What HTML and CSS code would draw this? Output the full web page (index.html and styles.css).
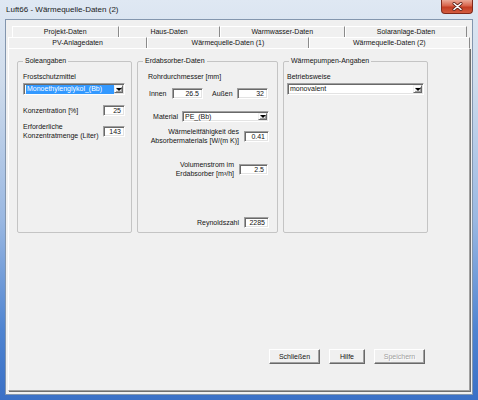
FILE: index.html
```html
<!DOCTYPE html>
<html lang="de">
<head>
    <meta charset="UTF-8">
    <title>Luft66 - Wärmequelle-Daten (2)</title>
    <link rel="stylesheet" href="styles.css">
</head>
<body>
    <div class="window">
        <div class="titlebar">
            <span class="title">Luft66 - Wärmequelle-Daten (2)</span>
            <button class="close" aria-label="Schließen">
                <svg width="11" height="9" viewBox="0 0 11 9">
                    <path d="M2 1.5 L9 7.5 M9 1.5 L2 7.5" stroke="#5a1e14" stroke-width="3" stroke-linecap="round"/>
                    <path d="M2 1.5 L9 7.5 M9 1.5 L2 7.5" stroke="#fff" stroke-width="1.6" stroke-linecap="round"/>
                </svg>
            </button>
        </div>

        <div class="client">
            <div class="tabrow back">
                <div class="tab">Projekt-Daten</div>
                <div class="tab">Haus-Daten</div>
                <div class="tab">Warmwasser-Daten</div>
                <div class="tab">Solaranlage-Daten</div>
            </div>
            <div class="tabrow front">
                <div class="tab">PV-Anlagedaten</div>
                <div class="tab">Wärmequelle-Daten (1)</div>
                <div class="tab active">Wärmequelle-Daten (2)</div>
            </div>

            <div class="page">
                <div class="groups">
                    <fieldset class="group sole">
                        <legend>Soleangaben</legend>
                        <div class="lbl">Frostschutzmittel</div>
                        <div class="combo">
                            <span class="value"><span class="selected">Monoethylenglykol_(Bb)</span></span>
                            <span class="arrow"></span>
                        </div>
                        <div class="row konz">
                            <span>Konzentration [%]</span>
                            <div class="field w22">25</div>
                        </div>
                        <div class="row menge">
                            <span>Erforderliche<br>Konzentratmenge (Liter)</span>
                            <div class="field w22">143</div>
                        </div>
                    </fieldset>

                    <fieldset class="group erd">
                        <legend>Erdabsorber-Daten</legend>
                        <div class="lbl indent">Rohrdurchmesser [mm]</div>
                        <div class="dims">
                            <span class="dim-lbl">Innen</span>
                            <div class="field w31">26.5</div>
                            <span class="dim-lbl aussen">Außen</span>
                            <div class="field w31">32</div>
                        </div>
                        <div class="row-end material">
                            <span>Material</span>
                            <div class="combo w87">
                                <span class="value">PE_(Bb)</span>
                                <span class="arrow"></span>
                            </div>
                        </div>
                        <div class="row-end leit">
                            <span>Wärmeleitfähigkeit des<br>Absorbermaterials [W/(m K)]</span>
                            <div class="field w25">0.41</div>
                        </div>
                        <div class="row-end volumen">
                            <span>Volumenstrom im<br>Erdabsorber [m³/h]</span>
                            <div class="field w29 nudge">2.5</div>
                        </div>
                        <div class="row-end reynolds">
                            <span>Reynoldszahl</span>
                            <div class="field w25">2285</div>
                        </div>
                    </fieldset>

                    <fieldset class="group wp">
                        <legend>Wärmepumpen-Angaben</legend>
                        <div class="lbl">Betriebsweise</div>
                        <div class="combo">
                            <span class="value">monovalent</span>
                            <span class="arrow"></span>
                        </div>
                    </fieldset>
                </div>

                <div class="actions">
                    <button class="btn wide">Schließen</button>
                    <button class="btn narrow">Hilfe</button>
                    <button class="btn wide" disabled>Speichern</button>
                </div>
            </div>
        </div>
    </div>
</body>
</html>
```

FILE: styles.css
```css
* {
    box-sizing: border-box;
}

body {
    margin: 0;
    font-family: "Liberation Sans", Arial, sans-serif;
    font-size: 7px;
    color: #141414;
}

/* window frame */
.window {
    width: 478px;
    height: 400px;
    display: flex;
    flex-direction: column;
    padding: 0 5px 5px 5px;
    background: linear-gradient(180deg, #dfe8f3 0px, #cfdcec 80px, #9ab8e2 220px, #4f84d1 330px, #3a70c6 400px);
}

.titlebar {
    flex: none;
    height: 19px;
    display: flex;
    justify-content: space-between;
    align-items: flex-start;
}

.title {
    font-size: 8px;
    line-height: 10px;
    padding: 5px 0 0 1px;
    color: #1b1b1b;
}

.close {
    width: 32px;
    height: 14px;
    padding: 0;
    border: 1px solid #80291b;
    border-top: none;
    border-radius: 0 0 4px 4px;
    background: linear-gradient(180deg, #eaa896 0%, #d8634a 45%, #c33c22 55%, #d35c40 100%);
    display: flex;
    align-items: center;
    justify-content: center;
}

.client {
    flex: 1;
    display: flex;
    flex-direction: column;
    background: #f0f0f0;
    border: 1px solid #8396ae;
    padding: 6px 2px 3px 2px;
}

/* tabs */
.tabrow {
    flex: none;
    display: flex;
    height: 11px;
}

.tabrow.back {
    margin: 0 3px 0 4px;
}

.tab {
    flex: 1 1 auto;
    text-align: center;
    white-space: nowrap;
    line-height: 10px;
    border-top: 1px solid #fff;
    border-left: 1px solid #fff;
    border-right: 1px solid #8a8a8a;
}

.tab.active {
    background: #f4f4f4;
}

.page {
    flex: 1;
    display: flex;
    flex-direction: column;
    border: 1px solid;
    border-color: #fff #a0a0a0 #a0a0a0 #fff;
    box-shadow: 1px 1px 0 #6e6e6e;
}

/* group boxes */
.groups {
    display: flex;
    gap: 5px;
    padding: 7px 0 0 8px;
}

.group {
    margin: 0;
    min-width: 0;
    height: 177px;
    border: 1px solid #c4c4c4;
    border-radius: 2px;
    padding: 6px 5px 0 5px;
}

.group legend {
    padding: 0 2px;
    line-height: 10px;
}

.sole { width: 115px; padding-right: 6px; }
.erd  { width: 141px; padding-right: 8px; }
.wp   { width: 145px; padding: 6px 3px 0 3px; }
.wp legend { margin-left: 2px; }

.lbl {
    line-height: 9px;
}

.indent {
    margin-left: 5px;
}

/* controls */
.field,
.combo {
    background: #fff;
    border: 1px solid;
    border-color: #a0a0a0 #fff #fff #a0a0a0;
    box-shadow: inset 1px 1px 0 #696969, inset -1px -1px 0 #e3e3e3;
}

.field {
    height: 11px;
    line-height: 9px;
    text-align: right;
    padding-right: 3px;
}

.w22 { width: 22px; }
.w25 { width: 25px; }
.w29 { width: 29px; }
.w31 { width: 31px; }
.w87 { width: 87px; }

.combo {
    height: 12px;
    margin-top: 2px;
    display: flex;
    padding: 1px;
    text-align: left;
}

.combo .value {
    flex: 1;
    min-width: 0;
    line-height: 8px;
    padding-left: 1px;
    white-space: nowrap;
}

.combo .selected {
    display: block;
    height: 9px;
    line-height: 8px;
    background: #3399ff;
    color: #fff;
    padding-left: 1px;
}

.combo .arrow {
    width: 9px;
    display: flex;
    align-items: center;
    justify-content: center;
    background: #f0f0f0;
    border: 1px solid;
    border-color: #f0f0f0 #696969 #696969 #f0f0f0;
    box-shadow: inset 1px 1px 0 #fff, inset -1px -1px 0 #a0a0a0;
}

.combo .arrow::after {
    content: "";
    border-left: 3px solid transparent;
    border-right: 3px solid transparent;
    border-top: 3px solid #000;
}

/* rows */
.row {
    display: flex;
    align-items: center;
    justify-content: space-between;
    line-height: 9px;
}

.konz  { margin-top: 10px; }
.menge { margin-top: 6px; }

.dims {
    display: flex;
    align-items: center;
    margin: 7px 0 0 6px;
}

.dim-lbl {
    width: 23px;
}

.aussen {
    width: 25px;
    margin-left: 9px;
}

.row-end {
    display: flex;
    align-items: center;
    justify-content: flex-end;
    gap: 5px;
    text-align: right;
    line-height: 9px;
}

.row-end .combo {
    margin-top: 0;
    height: 11px;
}

.material { margin-top: 12px; gap: 4px; }
.leit     { margin-top: 5px; }
.volumen  { margin-top: 15px; }
.reynolds { margin-top: 39px; }

.nudge {
    margin-right: 1px;
}

/* buttons */
.actions {
    margin-top: auto;
    margin-bottom: 26px;
    display: flex;
    justify-content: flex-end;
    gap: 9px;
    padding-right: 44px;
}

.btn {
    height: 15px;
    padding: 0;
    font: inherit;
    color: #141414;
    background: #f0f0f0;
    border: 1px solid;
    border-color: #fff #696969 #696969 #fff;
    box-shadow: inset -1px -1px 0 #a0a0a0;
}

.btn.wide   { width: 51px; }
.btn.narrow { width: 36px; }

.btn:disabled {
    color: #a0a0a0;
    text-shadow: 1px 1px 0 #fff;
}
```
